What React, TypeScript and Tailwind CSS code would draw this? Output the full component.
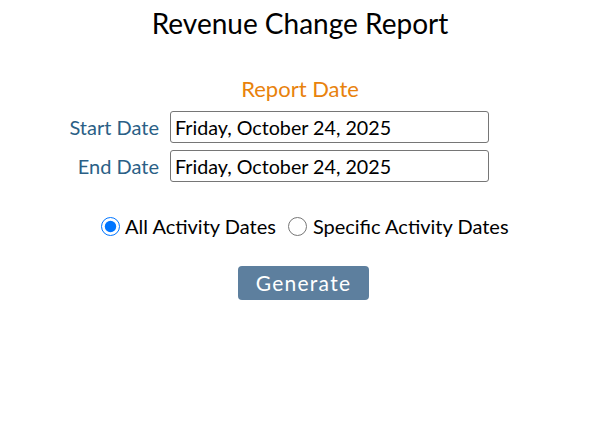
import React from "react";

export default function App() {
  return (
    <div
      className="w-[611px] h-[435px] bg-white text-black"
      style={{ fontFamily: "Lato, 'Open Sans', sans-serif" }}
    >
      <div className="w-[600px] flex flex-col items-center">
        <h1 className="text-[28px] leading-[34px] mt-[6px] font-normal">Revenue Change Report</h1>
        <div className="text-[22px] leading-[26px] mt-[36px] text-[#e8820c]">Report Date</div>
        <div className="self-start ml-[59px] mt-[9px] grid grid-cols-[100px_319px] gap-x-[11px] gap-y-[7px] items-center">
          <label className="text-[20px] text-[#2b5f86] text-right">Start Date</label>
          <input
            readOnly
            value="Friday, October 24, 2025"
            className="w-[319px] h-[32px] border border-[#767676] rounded-[3px] px-[4px] text-[19.7px] text-black outline-none"
          />
          <label className="text-[20px] text-[#2b5f86] text-right">End Date</label>
          <input
            readOnly
            value="Friday, October 24, 2025"
            className="w-[319px] h-[32px] border border-[#767676] rounded-[3px] px-[4px] text-[19.7px] text-black outline-none"
          />
        </div>
        <div className="self-start ml-[101px] mt-[29px] flex items-center text-[20px]">
          <label className="flex items-center">
            <input type="radio" name="act" defaultChecked className="w-[19px] h-[19px] m-0 mr-[5px] accent-[#0075ff]" />
            All Activity Dates
          </label>
          <label className="flex items-center ml-[12px]">
            <input type="radio" name="act" className="w-[19px] h-[19px] m-0 mr-[6px]" />
            Specific Activity Dates
          </label>
        </div>
        <button className="mt-[25px] ml-[7px] w-[131px] h-[34px] rounded-[4px] bg-[#5d7f9e] text-white text-[21px] leading-[34px] tracking-[1.25px]">
          Generate
        </button>
      </div>
    </div>
  );
}
